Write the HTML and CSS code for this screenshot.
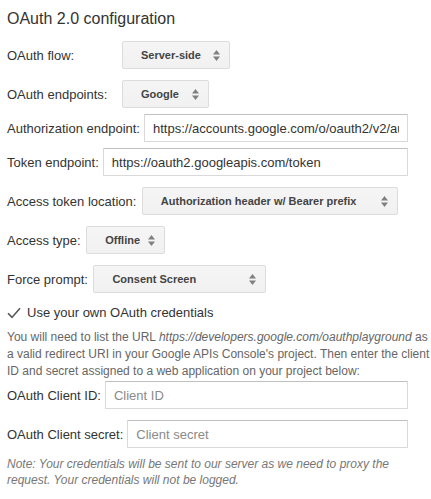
FILE: index.html
```html
<!DOCTYPE html>
<html>
<head>
<meta charset="utf-8">
<link rel="stylesheet" href="styles.css">
</head>
<body>
<div class="page">
  <h2 class="title">OAuth 2.0 configuration</h2>

  <div class="row">
    <span class="label label-wide">OAuth flow:</span>
    <div class="select sel-flow"><span>Server-side</span><svg class="arrows" width="7" height="11" viewBox="0 0 7 11"><polygon points="0,4.5 3.5,0 7,4.5"/><polygon points="0,6.5 7,6.5 3.5,11"/></svg></div>
  </div>

  <div class="row tight">
    <span class="label label-wide">OAuth endpoints:</span>
    <div class="select sel-endpoints"><span>Google</span><svg class="arrows" width="7" height="11" viewBox="0 0 7 11"><polygon points="0,4.5 3.5,0 7,4.5"/><polygon points="0,6.5 7,6.5 3.5,11"/></svg></div>
  </div>

  <div class="row tight">
    <span class="label">Authorization endpoint:</span>
    <input class="input" type="text" value="https://accounts.google.com/o/oauth2/v2/auth">
  </div>

  <div class="row">
    <span class="label">Token endpoint:</span>
    <input class="input" type="text" value="https://oauth2.googleapis.com/token">
  </div>

  <div class="row">
    <span class="label">Access token location:</span>
    <div class="select sel-location"><span>Authorization header w/ Bearer prefix</span><svg class="arrows" width="7" height="11" viewBox="0 0 7 11"><polygon points="0,4.5 3.5,0 7,4.5"/><polygon points="0,6.5 7,6.5 3.5,11"/></svg></div>
  </div>

  <div class="row">
    <span class="label">Access type:</span>
    <div class="select sel-type"><span>Offline</span><svg class="arrows" width="7" height="11" viewBox="0 0 7 11"><polygon points="0,4.5 3.5,0 7,4.5"/><polygon points="0,6.5 7,6.5 3.5,11"/></svg></div>
  </div>

  <div class="row">
    <span class="label">Force prompt:</span>
    <div class="select sel-prompt"><span>Consent Screen</span><svg class="arrows" width="7" height="11" viewBox="0 0 7 11"><polygon points="0,4.5 3.5,0 7,4.5"/><polygon points="0,6.5 7,6.5 3.5,11"/></svg></div>
  </div>

  <label class="check-row">
    <svg class="check" width="14" height="12" viewBox="0 0 14 12"><path d="M1 6.2 L5 10.4 L13 1.2" fill="none" stroke="#555" stroke-width="1.6"/></svg>
    <span>Use your own OAuth credentials</span>
  </label>

  <p class="info">You will need to list the URL <em>https://developers.google.com/oauthplayground</em> as a valid redirect URI in your Google APIs Console's project. Then enter the client ID and secret assigned to a web application on your project below:</p>

  <div class="row">
    <span class="label">OAuth Client ID:</span>
    <input class="input" type="text" placeholder="Client ID">
  </div>

  <div class="row">
    <span class="label">OAuth Client secret:</span>
    <input class="input" type="text" placeholder="Client secret">
  </div>

  <p class="note">Note: Your credentials will be sent to our server as we need to proxy the request. Your credentials will not be logged.</p>
</div>
</body>
</html>
```

FILE: styles.css
```css
html, body {
  margin: 0;
  padding: 0;
  background: #ffffff;
}

body {
  font-family: "Liberation Sans", Arial, sans-serif;
  color: #333;
}

.page {
  padding: 0 0 0 7px;
}

.title {
  margin: 10px 0 13px 0;
  font-size: 16px;
  line-height: 18px;
  font-weight: normal;
  color: #333;
}

.row {
  display: flex;
  align-items: center;
  gap: 4px;
  width: 401px;
  height: 28px;
  margin-bottom: 11px;
}

.row.tight {
  margin-bottom: 6px;
}

.label {
  font-size: 13px;
  color: #333;
  white-space: nowrap;
  flex: none;
}

.label-wide {
  width: 109.5px;
}

.select {
  box-sizing: border-box;
  height: 28px;
  margin-left: 1.5px;
  display: flex;
  align-items: center;
  justify-content: space-between;
  padding: 0 9px 0 18px;
  background: linear-gradient(#f5f5f5, #f1f1f1);
  border: 1px solid #dcdcdc;
  border-radius: 2px;
  font-size: 11px;
  font-weight: bold;
  color: #444;
  flex: none;
}

.select .arrows {
  fill: #808080;
  flex: none;
}

.sel-flow { width: 108px; }
.sel-endpoints { width: 87px; }
.sel-location { width: 256px; }
.sel-type { width: 79px; }
.sel-prompt { width: 173px; }

.input {
  box-sizing: border-box;
  flex: 1;
  min-width: 0;
  height: 28px;
  margin: 0;
  padding: 0 8px;
  border: 1px solid #d9d9d9;
  border-top-color: #c0c0c0;
  border-radius: 1px;
  font-family: "Liberation Sans", Arial, sans-serif;
  font-size: 13px;
  color: #333;
  background: #fff;
  outline: none;
}

.input::placeholder {
  color: #8a8a8a;
}

.check-row {
  display: flex;
  align-items: center;
  gap: 6px;
  height: 16px;
  font-size: 13px;
  color: #333;
  margin-bottom: 9px;
}

.check {
  flex: none;
  margin-top: 1px;
}

.info {
  margin: 0 0 1px 0;
  font-size: 12px;
  line-height: 17px;
  color: #666;
}

.info em {
  font-style: italic;
}

.note {
  margin: -3px 0 0 0;
  font-size: 12px;
  line-height: 16px;
  font-style: italic;
  color: #777;
}
```
